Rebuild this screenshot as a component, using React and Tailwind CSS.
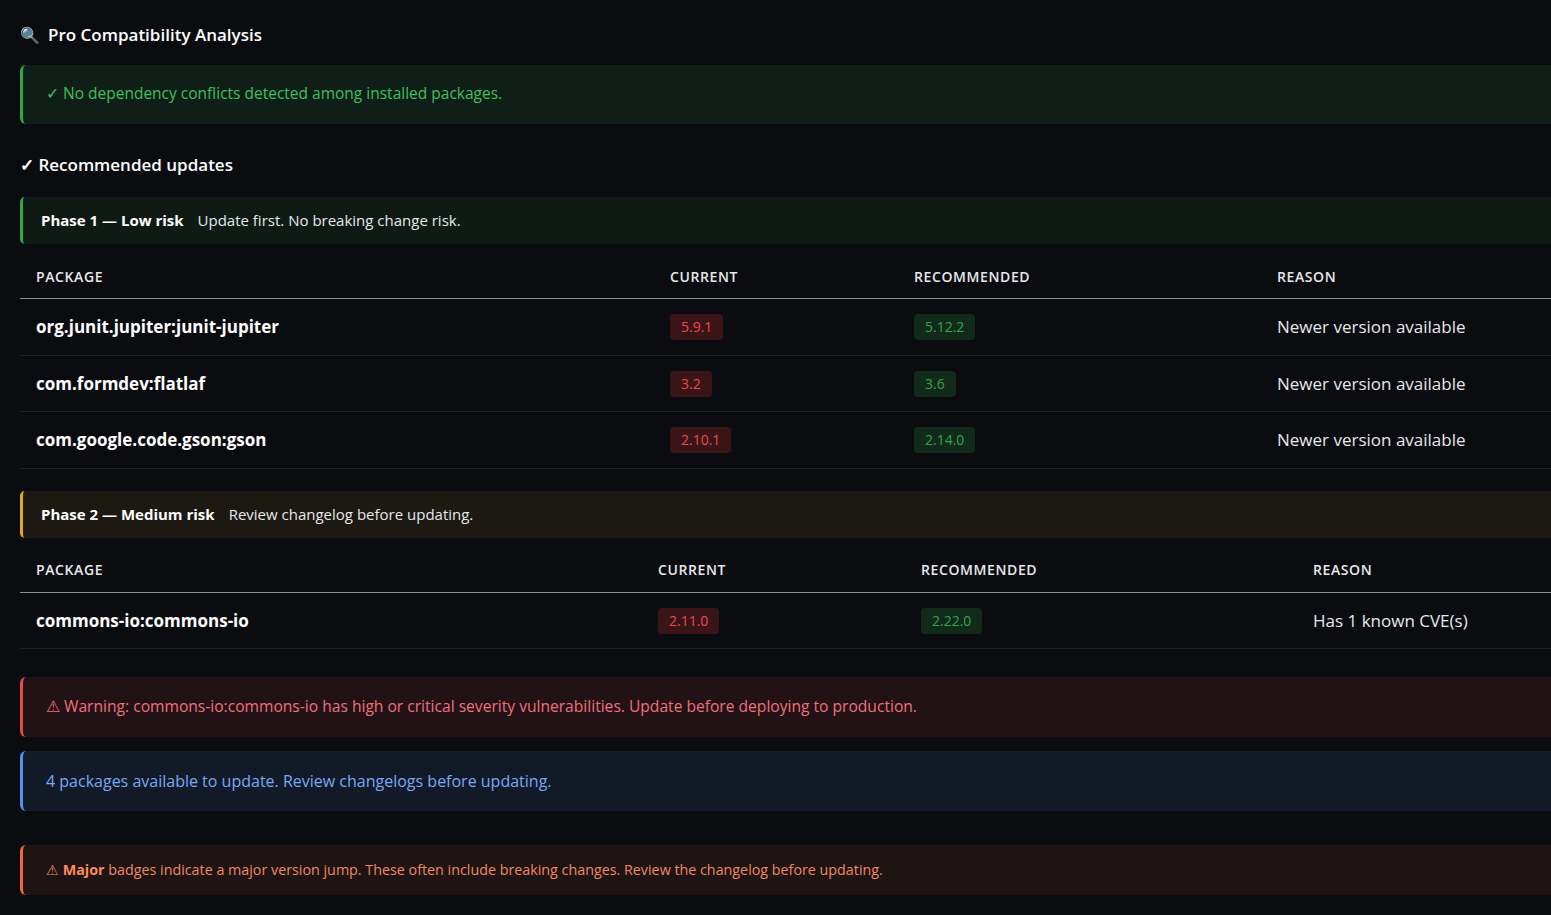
const font = { fontFamily: '"Segoe UI","Open Sans","Noto Sans",sans-serif' };

function Badge({ v, red }) {
  return (
    <span className={`inline-block rounded px-[11px] py-[3px] text-[14px] font-medium leading-[20px] ${red ? "bg-[#3a1518] text-[#f0474f]" : "bg-[#122a1a] text-[#2ea84a]"}`}>{v}</span>
  );
}

function Table({ cols, rows }) {
  return (
    <div className="mt-[10px]">
      <div className={`grid ${cols} h-[45px] items-center border-b border-[#8b8f96] text-[14px] font-semibold tracking-[0.6px] text-[#e6e8eb]`}>
        <div className="pl-4">PACKAGE</div><div className="pl-4">CURRENT</div><div className="pl-4">RECOMMENDED</div><div className="pl-4">REASON</div>
      </div>
      {rows.map((r) => (
        <div key={r[0]} className={`grid ${cols} h-[56.5px] items-center border-b border-[#1e2127] text-[17px]`}>
          <div className="pl-4 font-bold text-white">{r[0]}</div>
          <div className="pl-4"><Badge v={r[1]} red /></div>
          <div className="pl-4"><Badge v={r[2]} /></div>
          <div className="pl-4 text-[#e6e8eb]">{r[3]}</div>
        </div>
      ))}
    </div>
  );
}

function Phase({ title, desc, border, bg }) {
  return (
    <div className={`flex h-[47px] items-center rounded-l-[5px] border-l-[3px] ${border} ${bg} pl-[18px] text-[15px]`}>
      <span className="font-bold text-white">{title}</span>
      <span className="ml-[14px] text-[#e6e8eb]">{desc}</span>
    </div>
  );
}

function Alert({ border, bg, color, h, size, children }) {
  return (
    <div className={`flex items-center rounded-l-[6px] border-l-[3px] ${border} ${bg} ${color} ${h} ${size} pl-[23px]`}>{children}</div>
  );
}

export default function App() {
  return (
    <div style={font} className="min-h-[915px] w-[1551px] overflow-hidden bg-[#0b0c10] pl-5 pt-[22px]">
      <div className="flex items-center gap-2 text-[17px] font-semibold text-white">
        <span className="text-[16px]">🔍</span>Pro Compatibility Analysis
      </div>
      <div className="mt-[17px]">
        <Alert border="border-[#2ea84a]" bg="bg-[#0f1f17]" color="text-[#3fbf5f]" h="h-[59px]" size="text-[15.5px]">✓ No dependency conflicts detected among installed packages.</Alert>
      </div>
      <div className="mt-[28px] text-[17px] font-semibold text-white">✓ Recommended updates</div>
      <div className="mt-[20px]">
        <Phase title="Phase 1 — Low risk" desc="Update first. No breaking change risk." border="border-[#2ea84a]" bg="bg-[#0f1a15]" />
        <Table cols="grid-cols-[634px_244px_363px_1fr]" rows={[
          ["org.junit.jupiter:junit-jupiter", "5.9.1", "5.12.2", "Newer version available"],
          ["com.formdev:flatlaf", "3.2", "3.6", "Newer version available"],
          ["com.google.code.gson:gson", "2.10.1", "2.14.0", "Newer version available"],
        ]} />
      </div>
      <div className="mt-[22px]">
        <Phase title="Phase 2 — Medium risk" desc="Review changelog before updating." border="border-[#e3a81c]" bg="bg-[#1c1812]" />
        <Table cols="grid-cols-[622px_263px_392px_1fr]" rows={[
          ["commons-io:commons-io", "2.11.0", "2.22.0", "Has 1 known CVE(s)"],
        ]} />
      </div>
      <div className="mt-[28px]">
        <Alert border="border-[#e5484d]" bg="bg-[#221216]" color="text-[#f0707a]" h="h-[60px]" size="text-[15.6px]">⚠ Warning: commons-io:commons-io has high or critical severity vulnerabilities. Update before deploying to production.</Alert>
      </div>
      <div className="mt-[14px]">
        <Alert border="border-[#5b8def]" bg="bg-[#121a28]" color="text-[#7aa8f5]" h="h-[60px]" size="text-[16px]">4 packages available to update. Review changelogs before updating.</Alert>
      </div>
      <div className="mt-[34px]">
        <Alert border="border-[#f0683a]" bg="bg-[#1e1413]" color="text-[#f08866]" h="h-[50px]" size="text-[14.3px]"><span>⚠ <b className="text-[#ff8a5c]">Major</b> badges indicate a major version jump. These often include breaking changes. Review the changelog before updating.</span></Alert>
      </div>
    </div>
  );
}
